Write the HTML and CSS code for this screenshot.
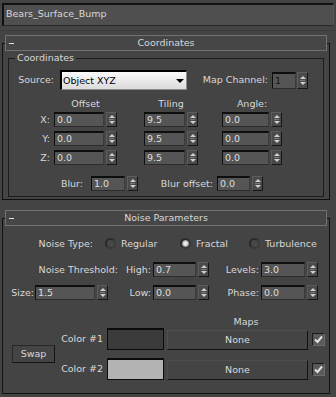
FILE: index.html
```html
<!DOCTYPE html>
<html lang="en">
<head>
  <meta charset="UTF-8">
  <meta name="viewport" content="width=device-width, initial-scale=1.0">
  <title>Bears_Surface_Bump</title>
  <link rel="stylesheet" href="styles.css">
</head>
<body>
  <div class="name-field">Bears_Surface_Bump</div>
  <div class="divider"></div>

  <div class="rollout coords">
    <div class="rollout-head"><span class="toggle"></span><span class="rollout-title">Coordinates</span></div>

    <fieldset class="group">
      <legend>Coordinates</legend>

      <div class="row source-row">
        <label class="lbl lbl-source">Source:</label>
        <div class="dropdown"><span>Object XYZ</span><span class="caret"></span></div>
        <label class="lbl lbl-channel">Map Channel:</label>
        <div class="num channel-num">1</div>
        <span class="spin"></span>
      </div>

      <div class="row heads">
        <span class="axis"></span>
        <span class="col-offset">Offset</span>
        <span class="col-tiling">Tiling</span>
        <span class="col-angle">Angle:</span>
      </div>

      <div class="row xyz first">
        <label class="axis">X:</label>
        <div class="col-offset"><div class="num">0.0</div><span class="spin"></span></div>
        <div class="col-tiling"><div class="num">9.5</div><span class="spin"></span></div>
        <div class="col-angle"><div class="num">0.0</div><span class="spin"></span></div>
      </div>
      <div class="row xyz">
        <label class="axis">Y:</label>
        <div class="col-offset"><div class="num">0.0</div><span class="spin"></span></div>
        <div class="col-tiling"><div class="num">9.5</div><span class="spin"></span></div>
        <div class="col-angle"><div class="num">0.0</div><span class="spin"></span></div>
      </div>
      <div class="row xyz">
        <label class="axis">Z:</label>
        <div class="col-offset"><div class="num">0.0</div><span class="spin"></span></div>
        <div class="col-tiling"><div class="num">9.5</div><span class="spin"></span></div>
        <div class="col-angle"><div class="num">0.0</div><span class="spin"></span></div>
      </div>

      <div class="row blur-row">
        <label class="lbl lbl-blur">Blur:</label>
        <div class="num blur-num">1.0</div><span class="spin"></span>
        <label class="lbl lbl-bluroff">Blur offset:</label>
        <div class="num bluroff-num">0.0</div><span class="spin"></span>
      </div>
    </fieldset>
  </div>

  <div class="rollout noise">
    <div class="rollout-head"><span class="toggle"></span><span class="rollout-title">Noise Parameters</span></div>

    <div class="row type-row">
      <label class="lbl lbl-type">Noise Type:</label>
      <div class="opt opt-regular"><span class="radio"></span>Regular</div>
      <div class="opt opt-fractal"><span class="radio on"></span>Fractal</div>
      <div class="opt"><span class="radio"></span>Turbulence</div>
    </div>

    <div class="row thresh-row">
      <label class="lbl lbl-thresh">Noise Threshold:</label>
      <label class="lbl lbl-high">High:</label>
      <div class="num mid-num">0.7</div><span class="spin"></span>
      <label class="lbl lbl-levels">Levels:</label>
      <div class="num right-num">3.0</div><span class="spin"></span>
    </div>

    <div class="row size-row">
      <label class="lbl lbl-size">Size:</label>
      <div class="num size-num">1.5</div><span class="spin"></span>
      <label class="lbl lbl-low">Low:</label>
      <div class="num mid-num">0.0</div><span class="spin"></span>
      <label class="lbl lbl-levels">Phase:</label>
      <div class="num right-num">0.0</div><span class="spin"></span>
    </div>

    <div class="maps">
      <span class="maps-title">Maps</span>

      <button class="swap">Swap</button>

      <span class="color-lbl row-1">Color #1</span>
      <span class="swatch swatch-dark row-1"></span>
      <button class="map-btn row-1">None</button>
      <span class="check row-1"><svg width="11" height="11" viewBox="0 0 11 11"><path d="M2 5.5 L4.5 8 L9 2.5" fill="none" stroke="#e2e2e2" stroke-width="2"/></svg></span>

      <span class="color-lbl row-2">Color #2</span>
      <span class="swatch swatch-light row-2"></span>
      <button class="map-btn row-2">None</button>
      <span class="check row-2"><svg width="11" height="11" viewBox="0 0 11 11"><path d="M2 5.5 L4.5 8 L9 2.5" fill="none" stroke="#e2e2e2" stroke-width="2"/></svg></span>
    </div>
  </div>
</body>
</html>
```

FILE: styles.css
```css
body {
  margin: 0;
  padding-top: 3px;
  width: 336px;
  height: 397px;
  box-sizing: border-box;
  overflow: hidden;
  background-color: #444;
  color: #d8d8d8;
  font-family: "DejaVu Sans", sans-serif;
  font-size: 9.5px;
  line-height: 12px;
}

/* name bar */
.name-field {
  margin: 0 2px;
  height: 23px;
  box-sizing: border-box;
  padding-left: 2px;
  line-height: 18px;
  background: #4f4f4f;
  border-top: 2px solid #111;
  border-left: 2px solid #111;
  border-bottom: 1px solid #262626;
  border-right: 1px solid #5a5a5a;
}
.divider {
  margin-top: 4px;
  height: 1px;
  background: #3a3a3a;
}

/* rollouts */
.rollout {
  margin-left: 2px;
  width: 328px;
  box-sizing: border-box;
  border: 1px solid #111;
}
.coords {
  margin-top: 12px;
}
.noise {
  margin-top: 18px;
  padding-bottom: 13px;
}
.rollout-head {
  display: flex;
  align-items: center;
  margin: -9px 2px 0;
  height: 16px;
  box-sizing: border-box;
  border: 1px solid #717171;
  background: #464646;
}
.toggle {
  width: 5px;
  height: 1px;
  margin-left: 3px;
  background: #e0e0e0;
}
.rollout-title {
  flex: 1;
  margin-right: 8px;
  text-align: center;
}

/* group box */
.group {
  margin: 1px 5px 2px;
  padding: 0 0 5px;
  min-width: 0;
  border: 1px solid #1c1c1c;
}
.group legend {
  margin-left: 6px;
  padding: 0 2px;
}

.row {
  display: flex;
  align-items: center;
  height: 15px;
}
.lbl {
  box-sizing: border-box;
  text-align: right;
  white-space: nowrap;
}

/* number fields and spinners */
.num {
  box-sizing: border-box;
  height: 15px;
  padding-left: 2px;
  line-height: 12px;
  background: #555;
  border-top: 2px solid #0e0e0e;
  border-left: 1px solid #0e0e0e;
  border-bottom: 1px solid #2c2c2c;
  border-right: 1px solid #3c3c3c;
  color: #dedede;
}
.spin {
  box-sizing: border-box;
  width: 11px;
  height: 15px;
  margin-left: 2px;
  display: flex;
  flex-direction: column;
  align-items: center;
  justify-content: center;
  gap: 3px;
  background: #4a4a4a linear-gradient(#7a7a7a, #7a7a7a) center / 5px 1px no-repeat;
  border: 1px solid;
  border-color: #5c5c5c #161616 #161616 #5c5c5c;
}
.spin::before,
.spin::after {
  content: "";
  border-left: 3px solid transparent;
  border-right: 3px solid transparent;
}
.spin::before {
  border-bottom: 3px solid #cfcfcf;
}
.spin::after {
  border-top: 3px solid #cfcfcf;
}

/* coordinates */
.source-row {
  margin-top: 6px;
  height: 20px;
}
.lbl-source {
  width: 51px;
  padding-right: 6px;
}
.dropdown {
  display: flex;
  align-items: center;
  justify-content: space-between;
  width: 127px;
  height: 20px;
  box-sizing: border-box;
  padding: 0 2px 0 1px;
  background: linear-gradient(#fbfbfb, #dadada);
  border-top: 2px solid #000;
  border-left: 2px solid #000;
  border-right: 1px solid #8c8c8c;
  border-bottom: 1px solid #8c8c8c;
  color: #000;
}
.caret {
  border-left: 4px solid transparent;
  border-right: 4px solid transparent;
  border-top: 4px solid #000;
}
.lbl-channel {
  width: 85px;
  padding-right: 4px;
}
.channel-num {
  width: 24px;
  height: 17px;
  line-height: 14px;
  color: #111;
}
.channel-num + .spin {
  height: 17px;
  margin-left: 1px;
}

.heads {
  margin-top: 8px;
  height: 12px;
}
.heads span {
  text-align: center;
}
.axis {
  width: 45px;
  box-sizing: border-box;
  padding-right: 4px;
  text-align: right;
}
.col-offset,
.col-tiling,
.col-angle {
  display: flex;
}
.col-offset {
  width: 63px;
}
.col-offset .num {
  width: 50px;
}
.col-tiling {
  width: 54px;
  margin-left: 27px;
}
.col-tiling .num {
  width: 41px;
}
.col-angle {
  width: 60px;
  margin-left: 24px;
}
.col-angle .num {
  width: 47px;
}
.heads .col-offset,
.heads .col-tiling,
.heads .col-angle {
  display: block;
}
.xyz {
  margin-top: 4px;
}
.xyz.first {
  margin-top: 2px;
}

.blur-row {
  margin-top: 11px;
}
.lbl-blur {
  width: 82px;
  padding-right: 8px;
}
.blur-num {
  width: 34px;
}
.lbl-bluroff {
  width: 79px;
  padding-right: 4px;
}
.bluroff-num {
  width: 33px;
}

/* noise parameters */
.type-row {
  margin-top: 10px;
}
.lbl-type {
  width: 102px;
  padding-right: 12px;
}
.opt {
  display: flex;
  align-items: center;
  gap: 5px;
}
.opt-regular {
  width: 75px;
}
.opt-fractal {
  width: 69px;
}
.radio {
  width: 11px;
  height: 11px;
  box-sizing: border-box;
  border-radius: 50%;
  border: 2px solid #2a2a2a;
  border-right-color: #3a3a3a;
  border-bottom-color: #3a3a3a;
  background: #484848;
}
.radio.on {
  background: radial-gradient(circle, #f4f4f4 0, #e6e6e6 1.6px, #9a9a9a 3.2px, #5a5a5a 4px);
}

.thresh-row {
  margin-top: 11px;
}
.lbl-thresh {
  width: 119px;
  padding-right: 4px;
}
.lbl-high {
  width: 31px;
  padding-right: 2px;
}
.mid-num {
  width: 43px;
}
.lbl-levels {
  width: 52px;
  padding-right: 2px;
}
.right-num {
  width: 44px;
}

.size-row {
  margin-top: 8px;
}
.lbl-size {
  width: 32px;
  padding-right: 1px;
}
.size-num {
  width: 60px;
}
.lbl-low {
  width: 45px;
  padding-right: 2px;
}

/* maps */
.maps {
  display: grid;
  grid-template-columns: 43px 52px 60px 145px 13px;
  grid-template-rows: 12px 22px 8px 22px;
  margin-top: 16px;
  padding-left: 9px;
}
.maps-title {
  grid-column: 4 / 6;
  grid-row: 1;
  text-align: center;
}
.row-1 {
  grid-row: 2;
}
.row-2 {
  grid-row: 4;
}
button {
  font: inherit;
  color: inherit;
  padding: 0;
  background: #444;
  cursor: pointer;
}
.swap {
  grid-column: 1;
  grid-row: 2 / 5;
  align-self: center;
  height: 18px;
  border: 1px solid #262626;
  border-right-color: #141414;
  border-bottom-color: #141414;
}
.color-lbl {
  grid-column: 2;
  align-self: center;
  padding-right: 4px;
  text-align: right;
  white-space: nowrap;
}
.swatch {
  grid-column: 3;
  width: 57px;
  box-sizing: border-box;
  border: 1px solid #0c0c0c;
  border-top-width: 2px;
}
.swatch-dark {
  background: #3b3b3b;
}
.swatch-light {
  background: #b3b3b3;
}
.map-btn {
  grid-column: 4;
  align-self: end;
  width: 141px;
  height: 20px;
  border: 1px solid;
  border-color: #4e4e4e #121212 #121212 #4e4e4e;
}
.check {
  grid-column: 5;
  align-self: center;
  display: flex;
  align-items: center;
  justify-content: center;
  width: 13px;
  height: 13px;
  box-sizing: border-box;
  background: #5a5a5a;
  border: 1px solid;
  border-color: #1a1a1a #6a6a6a #6a6a6a #1a1a1a;
}
```
